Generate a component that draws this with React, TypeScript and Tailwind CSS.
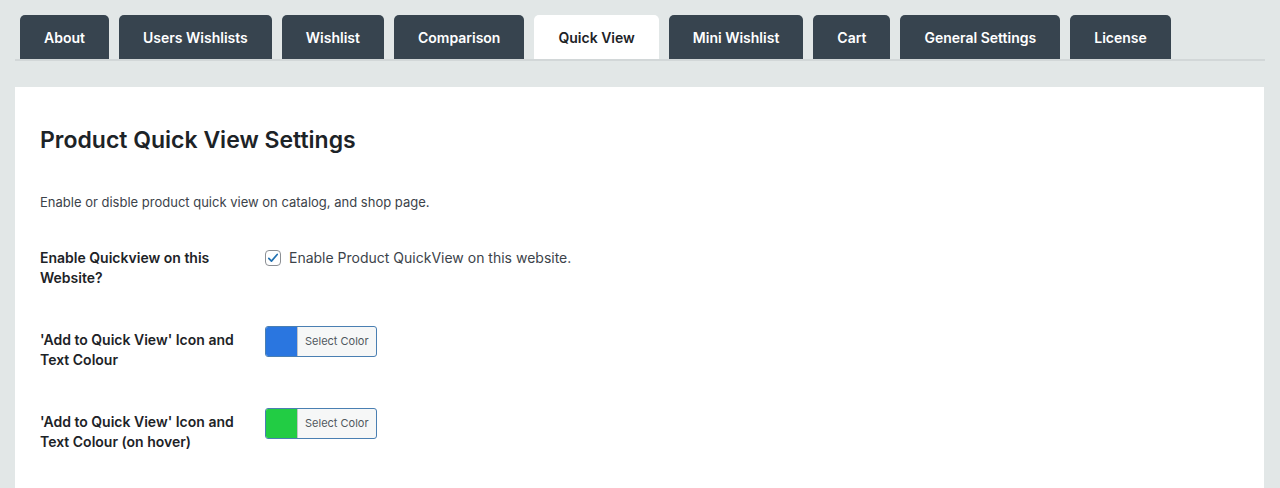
const tabs = [
  'About',
  'Users Wishlists',
  'Wishlist',
  'Comparison',
  'Quick View',
  'Mini Wishlist',
  'Cart',
  'General Settings',
  'License',
]

function ColorButton({ color }: { color: string }) {
  return (
    <button
      type="button"
      className="flex h-[31px] items-stretch overflow-hidden rounded-[3px] border border-[#4a7fb2] bg-[#f6f7f7]"
    >
      <span className="w-[31px]" style={{ backgroundColor: color }} />
      <span className="flex items-center border-l border-[#c3c4c7] px-[7px] text-[11px] text-[#50575e]">
        Select Color
      </span>
    </button>
  )
}

export default function App() {
  return (
    <div className="min-h-screen bg-[#e2e7e7] px-[15px] pt-[15px] font-['Inter','Noto_Sans',sans-serif] text-[#1d2327]">
      <nav className="flex gap-[10px] border-b-2 border-[#d2d7d8] pl-[5px]">
        {tabs.map((t) => (
          <div
            key={t}
            className={
              t === 'Quick View'
                ? 'flex h-[44px] items-center rounded-t-[5px] bg-white px-[24px] text-[14px] font-semibold text-[#1d2327]'
                : 'flex h-[44px] items-center rounded-t-[5px] bg-[#37444f] px-[24px] text-[14px] font-semibold text-white'
            }
          >
            {t}
          </div>
        ))}
      </nav>

      <main className="mt-[26px] mr-[1px] bg-white px-[25px] pt-[38px] pb-10">
        <h1 className="text-[23px] font-semibold leading-[30px]">Product Quick View Settings</h1>
        <p className="mt-[38px] text-[13px] text-[#3c434a]">
          Enable or disble product quick view on catalog, and shop page.
        </p>

        <div className="mt-[35px] flex flex-col gap-[42px]">
          <div className="flex">
            <div className="w-[225px] text-[14px] font-semibold leading-[20px]">
              Enable Quickview on this
              <br />
              Website?
            </div>
            <label className="flex h-[20px] items-center gap-[8px] text-[14px] text-[#3c434a]">
              <span className="flex h-[16px] w-[16px] items-center justify-center rounded-[4px] border border-[#8c8f94] bg-white">
                <svg viewBox="0 0 20 20" className="h-[14px] w-[14px]">
                  <path
                    d="M4 10.5l3.8 4L16 5"
                    fill="none"
                    stroke="#2271b1"
                    strokeWidth="2.4"
                    strokeLinecap="round"
                    strokeLinejoin="round"
                  />
                </svg>
              </span>
              Enable Product QuickView on this website.
            </label>
          </div>

          <div className="flex">
            <div className="w-[225px] text-[14px] font-semibold leading-[20px]">
              'Add to Quick View' Icon and
              <br />
              Text Colour
            </div>
            <div className="-mt-[4px]">
              <ColorButton color="#2a76e0" />
            </div>
          </div>

          <div className="flex">
            <div className="w-[225px] text-[14px] font-semibold leading-[20px]">
              'Add to Quick View' Icon and
              <br />
              Text Colour (on hover)
            </div>
            <div className="-mt-[4px]">
              <ColorButton color="#22cc44" />
            </div>
          </div>
        </div>
      </main>
    </div>
  )
}
